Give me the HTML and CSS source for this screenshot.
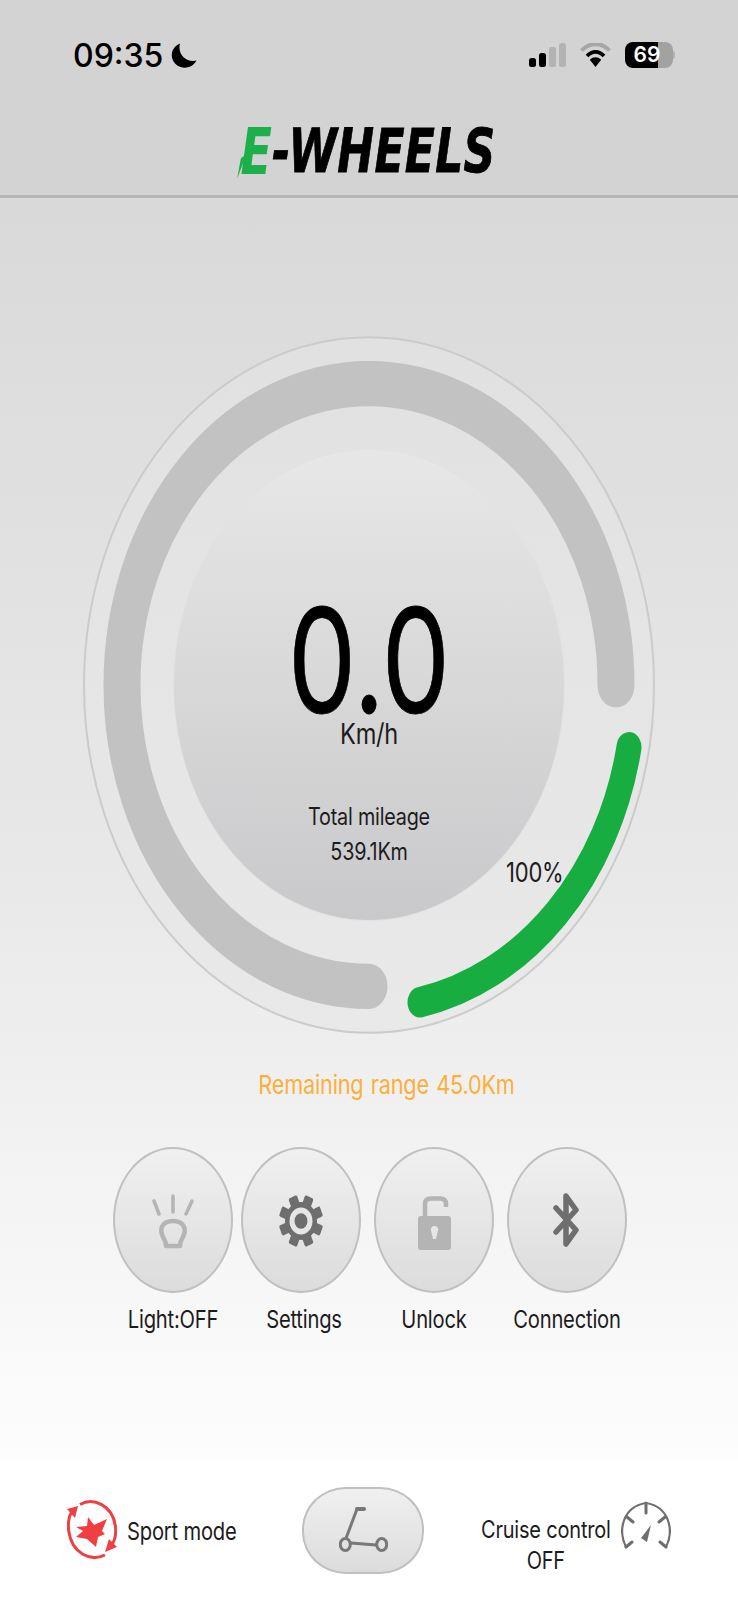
FILE: index.html
```html
<!DOCTYPE html>
<html lang="en">
<head>
<meta charset="utf-8">
<title>E-Wheels</title>
<link rel="stylesheet" href="styles.css">
</head>
<body>
<div class="app">
  <header class="top">
    <div class="status">
      <div class="status-left">
        <span class="clock">09:35</span>
        <svg class="moon" viewBox="0 0 26 25"><path d="M9 0.5A13 12.5 0 1 0 25.5 17.5 C16 20 6 12 9 0.5Z"/></svg>
      </div>
      <div class="status-right">
        <svg class="signal" viewBox="0 0 37 24">
          <rect x="0" y="15" width="7" height="9" rx="2.5" fill="#000"/>
          <rect x="10" y="10" width="7" height="14" rx="2.500" fill="#000"/>
          <rect x="20" y="4" width="7" height="20" rx="2.500" fill="#b3b3b3"/>
          <rect x="30" y="0" width="7" height="24" rx="2.500" fill="#b3b3b3"/>
        </svg>
        <svg class="wifi" viewBox="0 0 31 24">
          <path d="M1.500 7.500C9 -1 22 -1 29.500 7.500" fill="none" stroke="#a6a6a6" stroke-width="4"/>
          <path d="M7 13C12 7.500 19 7.500 24 13" fill="none" stroke="#000" stroke-width="3.600"/>
          <path d="M15.500 24L9.800 16.800C13 13.500 18 13.500 21.200 16.800Z" fill="#000"/>
        </svg>
        <div class="battery"><span class="battery-level">69</span><span class="battery-nub"></span></div>
      </div>
    </div>
    <div class="logo">
      <span class="logo-e">E<svg class="logo-bolt" viewBox="0 0 16 30"><polygon points="16,0 0,30 6,6" fill="#1cb04a"/></svg></span>
      <span class="logo-text">-WHEELS</span>
    </div>
  </header>

  <main class="main">
    <section class="gauge">
      <svg class="gauge-art" viewBox="0 0 572 572" preserveAspectRatio="none">
        <defs>
          <linearGradient id="faceFill" x1="0" y1="0" x2="0" y2="1">
            <stop offset="0" stop-color="#e1e1e1"/>
            <stop offset="1" stop-color="#e9e9e9"/>
          </linearGradient>
        </defs>
        <circle class="gauge-face" cx="286" cy="286" r="285" fill="url(#faceFill)"/>
        <path class="gauge-track" d="M533 286A247 247 0 1 0 286 533"/>
        <path class="gauge-charge" d="M546 337A265 265 0 0 1 337 546"/>
      </svg>
      <div class="disc">
        <div class="speed">0.0</div>
        <div class="unit">Km/h</div>
        <div class="mileage">Total mileage</div>
        <div class="mileage">539.1Km</div>
      </div>
      <div class="percent">100%</div>
    </section>

    <div class="range">Remaining range 45.0Km</div>

    <div class="actions">
      <div class="action action-first">
        <div class="round">
          <svg class="icon-light" viewBox="0 0 42 55" fill="none" stroke="#b4b4b4" stroke-linecap="round">
            <path d="M2 7L7 20M21 2V18M40 7L34 20" stroke-width="3.500"/>
            <path d="M14 52H28C28 47 29.500 46 31 43C35 35 32 27 21 27C10 27 7 35 11 43C12.500 46 14 47 14 52Z" stroke-width="4.500" stroke-linejoin="round"/>
          </svg>
        </div>
        <div class="label">Light:OFF</div>
      </div>
      <div class="action">
        <div class="round">
          <svg class="icon-gear" viewBox="0 0 44 44" preserveAspectRatio="none">
            <g fill="#6e6e6e">
              <circle cx="22" cy="22" r="16"/>
              <rect x="17.500" y="0" width="9" height="10" rx="1.500" transform="rotate(22.500 22 22)"/>
              <rect x="17.500" y="0" width="9" height="10" rx="1.500" transform="rotate(67.500 22 22)"/>
              <rect x="17.500" y="0" width="9" height="10" rx="1.500" transform="rotate(112.500 22 22)"/>
              <rect x="17.500" y="0" width="9" height="10" rx="1.500" transform="rotate(157.500 22 22)"/>
              <rect x="17.500" y="0" width="9" height="10" rx="1.500" transform="rotate(202.500 22 22)"/>
              <rect x="17.500" y="0" width="9" height="10" rx="1.500" transform="rotate(247.500 22 22)"/>
              <rect x="17.500" y="0" width="9" height="10" rx="1.500" transform="rotate(292.500 22 22)"/>
              <rect x="17.500" y="0" width="9" height="10" rx="1.500" transform="rotate(337.500 22 22)"/>
            </g>
            <circle cx="22" cy="22" r="11.500" fill="#e6e6e6"/>
            <circle cx="22" cy="22" r="6.500" fill="#6e6e6e"/>
          </svg>
        </div>
        <div class="label label-settings">Settings</div>
      </div>
      <div class="action">
        <div class="round">
          <svg class="icon-lock" viewBox="0 0 33 54">
            <path d="M7 22V8C7 4 9 2.500 13 2.500H22C26 2.500 28 4 28 8V11" fill="none" stroke="#b4b4b4" stroke-width="4.500"/>
            <rect x="0" y="20" width="33" height="34" rx="3" fill="#b4b4b4"/>
            <path d="M16.500 30a3.500 4 0 0 1 3 6.500L18 43H15L13.500 36.500A3.500 4 0 0 1 16.500 30Z" fill="#e6e6e6"/>
          </svg>
        </div>
        <div class="label">Unlock</div>
      </div>
      <div class="action">
        <div class="round">
          <svg class="icon-bt" viewBox="0 0 26 54" fill="none" stroke="#6e6e6e" stroke-width="5.500" stroke-linejoin="round" stroke-linecap="round">
            <path d="M3 15L23 37L13 51V3L23 17L3 39"/>
          </svg>
        </div>
        <div class="label">Connection</div>
      </div>
    </div>
  </main>

  <footer class="bottom">
    <div class="sport">
      <svg class="icon-sport" viewBox="0 0 50 61">
        <g fill="none" stroke="#ef3f43" stroke-width="3">
          <path d="M13 5.500C26 -2 46 6 48.500 28C49.500 37 47 43 44 47"/>
          <path d="M38 56C24 63 5 55 1.700 32C0.700 24 2 17 5 12"/>
        </g>
        <polygon fill="#ef3f43" points="0,10 11,7 8,19"/>
        <polygon fill="#ef3f43" points="50,48 38,53 42,40"/>
        <path fill="#ef3f43" d="M21 18L27 26L40 20L35 32L38 35L31 38L29 48L20 40L9 38L16 32L9 28L20 27Z"/>
      </svg>
      <span class="sport-text">Sport mode</span>
    </div>
    <button class="scooter" type="button" aria-label="Scooter">
      <svg class="icon-scooter" viewBox="0 0 49 45" fill="none" stroke="#787878" stroke-linecap="round" stroke-linejoin="round">
        <path d="M18 2L7.500 30" stroke-width="3"/>
        <path d="M18 2H25" stroke-width="4"/>
        <path d="M12 36L37 38" stroke-width="3"/>
        <ellipse cx="6.300" cy="37.500" rx="5" ry="6" stroke-width="3"/>
        <ellipse cx="42.700" cy="37.500" rx="5" ry="6" stroke-width="3"/>
      </svg>
    </button>
    <div class="cruise">
      <div class="cruise-text"><div>Cruise control</div><div>OFF</div></div>
      <svg class="icon-cruise" viewBox="0 0 50 48" fill="none" stroke="#6e6e6e" stroke-linecap="round">
        <path d="M5 46C-3 30 1 6 25 2C49 6 53 30 45 46" stroke-width="2.200"/>
        <path d="M25 2V12M6 16L12 21M44 16L38 21M5 46L11 41M45 46L39 41" stroke-width="3"/>
        <path fill="#6e6e6e" stroke="none" d="M30 24L26 41L20 37Z"/>
      </svg>
    </div>
  </footer>
</div>
</body>
</html>
```

FILE: styles.css
```css
* { box-sizing: border-box; }
html, body { margin: 0; padding: 0; }
body {
  font-family: Inter, "Liberation Sans", Arial, sans-serif;
  color: #1c1c1c;
  background: #fff;
}
.app {
  width: 738px;
  height: 1600px;
  overflow: hidden;
  display: flex;
  flex-direction: column;
}

/* header */
.top {
  height: 198px;
  flex: none;
  background: #d3d3d3;
  border-bottom: 3px solid #b6b6b6;
}
.status {
  display: flex;
  justify-content: space-between;
  padding: 43px 65px 0 73px;
  height: 126px;
}
.status-left { display: flex; align-items: flex-start; gap: 8px; }
.clock {
  font-family: Inter, sans-serif;
  font-weight: 500;
  font-size: 32px;
  line-height: 26px;
  color: #000;
}
.moon { width: 26px; height: 25px; fill: #000; }
.status-right { display: flex; align-items: flex-start; }
.signal { width: 37px; height: 24px; }
.wifi { width: 31px; height: 24px; margin: 0 14px; }
.battery {
  width: 48px;
  height: 26px;
  margin-top: -1px;
  padding-right: 4px;
  border-radius: 8px;
  background: linear-gradient(90deg, #000 0, #000 69%, #a2a2a2 69%, #a2a2a2 100%);
  position: relative;
  display: flex;
  align-items: center;
  justify-content: center;
}
.battery-level {
  font-weight: 600;
  font-size: 21px;
  line-height: 26px;
  color: #fff;
}
.battery-nub {
  position: absolute;
  right: -2px;
  top: 9px;
  width: 2px;
  height: 8px;
  border-radius: 0 2px 2px 0;
  background: #b4b4b4;
}
.logo {
  display: flex;
  justify-content: center;
  align-items: center;
  height: 46px;
  margin-top: 3px;
  padding-right: 2px;
}
.logo-e, .logo-text {
  font-family: "DejaVu Sans", sans-serif;
  font-weight: 700;
  font-style: italic;
  line-height: 34px;
  display: block;
  white-space: nowrap;
}
.logo-e {
  position: relative;
  font-size: 46px;
  color: #1cb04a;
  transform: scaleY(1.4);
}
.logo-bolt {
  position: absolute;
  left: -4px;
  top: 18px;
  width: 12px;
  height: 18px;
}
.logo-text {
  font-size: 44px;
  letter-spacing: 0.3px;
  color: #000;
  -webkit-text-stroke: 0.6px #000;
  transform: scaleY(1.36);
}

/* main */
.main {
  flex: 1;
  background: linear-gradient(180deg, #d9d9d9 0%, #e9e9e9 55%, #fdfdfd 100%);
  padding-top: 138px;
}
.gauge {
  position: relative;
  width: 572px;
  height: 698px;
  margin-left: 83px;
  display: flex;
  justify-content: center;
  padding-top: 114px;
}
.gauge-art {
  position: absolute;
  left: 0;
  top: 0;
  width: 572px;
  height: 698px;
}
.gauge-face {
  stroke: #cbcbcb;
  stroke-width: 2;
  vector-effect: non-scaling-stroke;
}
.gauge-track { fill: none; stroke: #c2c2c2; stroke-width: 37; stroke-linecap: round; }
.gauge-charge { fill: none; stroke: #17ad41; stroke-width: 25; stroke-linecap: round; }
.disc {
  position: relative;
  width: 390px;
  height: 470px;
  border-radius: 50%;
  background: linear-gradient(180deg, #e7e7e7 0%, #c9c9cb 100%);
  box-shadow: 0 0 0 1px #e2e2e2;
  padding-top: 172px;
  text-align: center;
}
.speed {
  font-size: 108px;
  line-height: 78px;
  color: #000;
  -webkit-text-stroke: 0.6px #000;
  transform: scaleY(1.34);
}
.unit {
  margin-top: 19px;
  font-size: 23.600px;
  line-height: 30px;
  letter-spacing: -0.3px;
  transform: scaleY(1.2);
}
.mileage {
  font-size: 19.800px;
  line-height: 35px;
  letter-spacing: -0.2px;
  transform: scaleY(1.2);
}
.unit + .mileage { margin-top: 51px; }
.percent {
  position: absolute;
  left: 423px;
  top: 521px;
  font-size: 22px;
  line-height: 30px;
  letter-spacing: -0.2px;
  transform: scaleY(1.2);
}
.range {
  margin-top: 35px;
  padding-left: 35px;
  font-size: 21.700px;
  line-height: 30px;
  text-align: center;
  word-spacing: 1.500px;
  letter-spacing: -0.2px;
  color: #fbb03b;
  transform: scaleY(1.2);
}
.actions {
  display: flex;
  gap: 13px;
  margin-top: 48px;
  padding-left: 113px;
}
.action { width: 120px; display: flex; flex-direction: column; align-items: center; }
.action-first { margin-right: -5px; }
.round {
  width: 120px;
  height: 146px;
  border-radius: 50%;
  border: 2px solid #c0c0c0;
  background: linear-gradient(180deg, #f0f0f0 0%, #dcdcdc 100%);
  display: flex;
  align-items: center;
  justify-content: center;
}
.label {
  margin-top: 12px;
  font-size: 20.200px;
  line-height: 30px;
  letter-spacing: -0.2px;
  white-space: nowrap;
  transform: scaleY(1.2);
}
.label-settings { padding-left: 6px; }
.icon-light { width: 42px; height: 55px; margin-top: 2px; }
.icon-gear { width: 44px; height: 52px; margin-top: 2px; }
.icon-lock { width: 33px; height: 54px; margin-top: 6px; }
.icon-bt { width: 26px; height: 54px; margin-top: 0; margin-left: -3px; }

/* bottom */
.bottom {
  height: 140px;
  flex: none;
  background: #fff;
  display: flex;
  align-items: flex-start;
  padding: 27px 0 0 67px;
}
.sport { display: flex; width: 168px; gap: 10px; padding-top: 12px; }
.icon-sport { width: 50px; height: 61px; flex: none; }
.sport-text {
  margin-top: 19px;
  font-size: 20.200px;
  line-height: 30px;
  letter-spacing: -0.2px;
  white-space: nowrap;
  transform: scaleY(1.2);
}
.scooter {
  width: 122px;
  height: 87px;
  margin-left: 67px;
  padding: 0;
  border: 2px solid #c0c0c0;
  border-radius: 44px / 42px;
  background: linear-gradient(180deg, #f0f0f0 0%, #dcdcdc 100%);
  display: flex;
  align-items: center;
  justify-content: center;
}
.icon-scooter { width: 49px; height: 45px; margin-top: -3px; }
.cruise { display: flex; margin-left: 57px; gap: 10px; padding-top: 14px; }
.cruise-text {
  margin-top: 18px;
  font-size: 20px;
  line-height: 26px;
  letter-spacing: -0.2px;
  text-align: center;
  white-space: nowrap;
  transform: scaleY(1.2);
}
.icon-cruise { width: 50px; height: 48px; flex: none; }
```
